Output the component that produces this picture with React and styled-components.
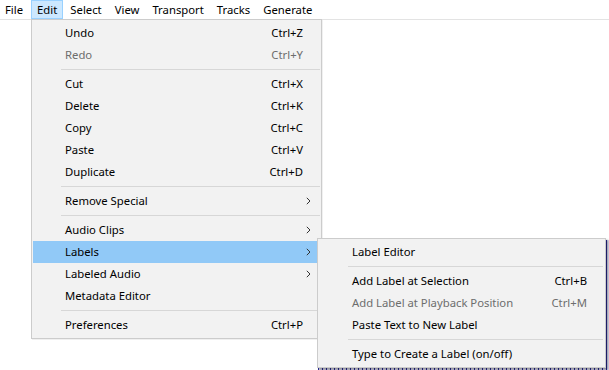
import React from "react";
import styled, { createGlobalStyle } from "styled-components";

const Global = createGlobalStyle`
  html, body { margin: 0; padding: 0; background: #ffffff; }
  body { font-family: "Noto Sans", "Segoe UI", sans-serif; font-size: 11.3px; color: #000; }
`;

const Screen = styled.div`
  position: relative;
  display: flex;
  flex-direction: column;
  width: 609px;
  height: 370px;
  overflow: hidden;
  background: #ffffff;
`;

const MenuBar = styled.div`
  display: flex;
  align-items: stretch;
  height: 19px;
  padding-left: 0;
  border-bottom: 1px solid #e3e3e3;
  flex-shrink: 0;
`;

const BarItem = styled.div`
  display: flex;
  align-items: center;
  padding: 0 5px 1px;
  margin-right: 1px;
  box-sizing: border-box;
  border: 1px solid ${(p) => (p.$open ? "#99d1ff" : "transparent")};
  background: ${(p) => (p.$open ? "#cce8ff" : "transparent")};
  white-space: nowrap;
  &:first-child {
    margin-left: -1px;
    margin-right: 2px;
  }
`;

const Workspace = styled.div`
  flex: 1;
  display: grid;
  grid-template-rows: 220px 1fr;
  grid-template-columns: 318px 1fr;
`;

const Track = styled.div`
  grid-row: 2;
  grid-column: 2;
  background: #4a4ab0;
  background-image: repeating-linear-gradient(
    90deg,
    #2a2a9a 0px,
    #2a2a9a 1px,
    #dcdcf0 1px,
    #dcdcf0 4px
  );
`;

const Menu = styled.div`
  position: absolute;
  left: ${(p) => p.$x}px;
  top: ${(p) => p.$y}px;
  width: ${(p) => p.$w}px;
  box-sizing: border-box;
  display: flex;
  flex-direction: column;
  padding: 2px 0;
  background: #f2f2f2;
  border: 1px solid #cccccc;
  box-shadow: ${(p) => (p.$shadow ? "2px 2px 2px rgba(0,0,0,0.35)" : "1px 1px 0 rgba(0,0,0,0.06)")};
`;

const Item = styled.div`
  position: relative;
  display: flex;
  align-items: center;
  height: 22px;
  margin: 0 3px 0 1px;
  padding: 0 15px 1px ${(p) => p.$indent}px;
  box-sizing: border-box;
  background: ${(p) => (p.$active ? "#91c9f7" : "transparent")};
  color: ${(p) => (p.$disabled ? "#6d6d6d" : "#000000")};
  white-space: nowrap;
`;

const Label = styled.span`
  flex: 1;
`;

const Shortcut = styled.span`
  text-align: right;
`;

const Chevron = styled.svg`
  position: absolute;
  right: 7px;
  top: 7px;
`;

const Separator = styled.div`
  height: 7px;
  display: flex;
  align-items: center;
  padding: 0 ${(p) => p.$right}px 0 ${(p) => p.$left}px;
  &::after {
    content: "";
    flex: 1;
    height: 1px;
    background: #d7d7d7;
  }
`;

const barItems = ["File", "Edit", "Select", "View", "Transport", "Tracks", "Generate"];

const editMenu = [
  { t: "Undo", k: "Ctrl+Z" },
  { t: "Redo", k: "Ctrl+Y", d: true },
  "sep",
  { t: "Cut", k: "Ctrl+X" },
  { t: "Delete", k: "Ctrl+K" },
  { t: "Copy", k: "Ctrl+C" },
  { t: "Paste", k: "Ctrl+V" },
  { t: "Duplicate", k: "Ctrl+D" },
  "sep",
  { t: "Remove Special", sub: true },
  "sep",
  { t: "Audio Clips", sub: true },
  { t: "Labels", sub: true, active: true },
  { t: "Labeled Audio", sub: true },
  { t: "Metadata Editor" },
  "sep",
  { t: "Preferences", k: "Ctrl+P" },
];

const labelsMenu = [
  { t: "Label Editor" },
  "sep",
  { t: "Add Label at Selection", k: "Ctrl+B" },
  { t: "Add Label at Playback Position", k: "Ctrl+M", d: true },
  { t: "Paste Text to New Label" },
  "sep",
  { t: "Type to Create a Label (on/off)" },
];

function MenuList({ items, indent, sepLeft, sepRight }) {
  return items.map((it, i) =>
    it === "sep" ? (
      <Separator key={i} $left={sepLeft} $right={sepRight} />
    ) : (
      <Item key={i} $indent={indent} $disabled={it.d} $active={it.active}>
        <Label>{it.t}</Label>
        {it.k && <Shortcut>{it.k}</Shortcut>}
        {it.sub && (
          <Chevron width="5" height="8" viewBox="0 0 5 8">
            <path d="M0.8 0.8 L4 4 L0.8 7.2" fill="none" stroke="#333" strokeWidth="1" />
          </Chevron>
        )}
      </Item>
    )
  );
}

export default function App() {
  return (
    <Screen>
      <Global />
      <MenuBar>
        {barItems.map((b) => (
          <BarItem key={b} $open={b === "Edit"}>
            {b}
          </BarItem>
        ))}
      </MenuBar>
      <Workspace>
        <Track />
      </Workspace>
      <Menu $x={31} $y={19} $w={291}>
        <MenuList items={editMenu} indent={32} sepLeft={29} sepRight={1} />
      </Menu>
      <Menu $x={317} $y={238} $w={289} $shadow>
        <MenuList items={labelsMenu} indent={33} sepLeft={30} sepRight={2} />
      </Menu>
    </Screen>
  );
}
